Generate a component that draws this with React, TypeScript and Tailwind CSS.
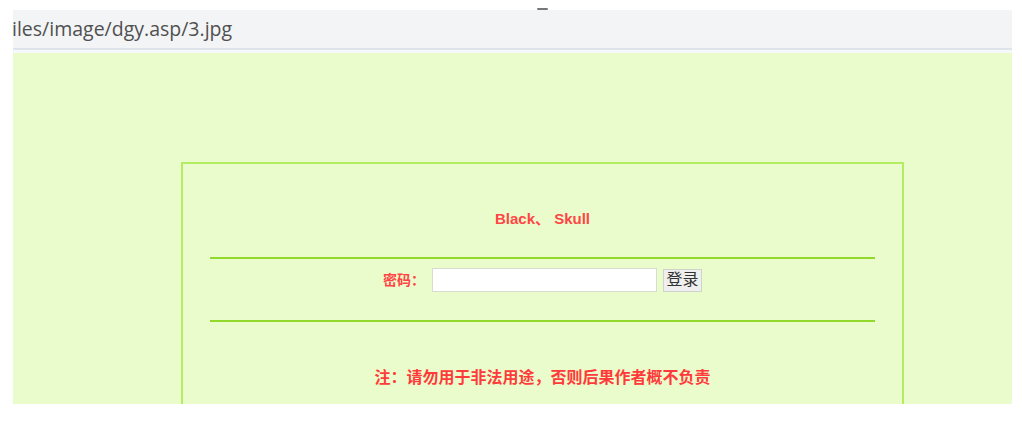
export default function App() {
  return (
    <div className="w-[1022px] h-[429px] bg-white overflow-hidden">
      <div className="ml-[13px] w-[999px] pt-[10px]">
        <div className="relative h-[38px] bg-[#f3f4f6] flex items-center">
          <span className="absolute left-[524px] top-[-2px] w-[11px] h-[2px] bg-[#777] rounded-full" />
          <span className="font-['Open_Sans',sans-serif] text-[19.5px] text-[#505050] leading-none -ml-[1px]">
            iles/image/dgy.asp/3.jpg
          </span>
        </div>
        <div className="h-[2px] bg-[#dfe3ea]" />
        <div className="h-[3px] bg-[#f7f8fa]" />
        <div className="h-[351px] bg-[#ebfccc] overflow-hidden pt-[109px]">
          <div className="ml-[168px] w-[723px] h-[300px] border-2 border-[#b4ec62] px-[27px] pt-[45px] font-['Liberation_Sans','Noto_Sans_CJK_SC',sans-serif] font-bold">
            <div className="text-center text-[15px] leading-[20px] text-[#ff4545]">Black、 Skull</div>
            <div className="mt-[28px] h-[2px] bg-[#92d92c]" />
            <div className="mt-[9px] flex items-center justify-center h-[24px]">
              <span className="text-[14px] text-[#ff4545]">密码：</span>
              <input className="ml-[7px] w-[225px] h-[24px] bg-white border border-[#d6dcd0]" />
              <button className="ml-[6px] w-[39px] h-[23px] bg-[#efefef] border border-[#cfd3cc] text-[16px] font-normal leading-none text-[#333]">
                登录
              </button>
            </div>
            <div className="mt-[28px] h-[2px] bg-[#92d92c]" />
            <div className="mt-[46px] text-center text-[16px] leading-[20px] text-[#ff3a3a]">
              注：请勿用于非法用途，否则后果作者概不负责
            </div>
          </div>
        </div>
      </div>
    </div>
  );
}
